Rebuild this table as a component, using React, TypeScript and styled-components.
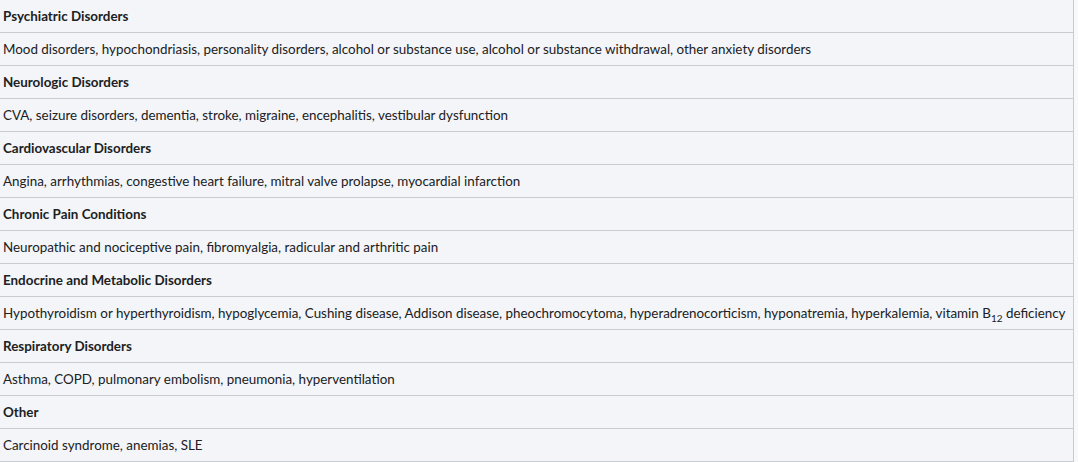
import React from "react";
import styled, { createGlobalStyle } from "styled-components";

const GlobalStyle = createGlobalStyle`
  body {
    margin: 0;
    background: #f8f9fa;
  }
`;

const Table = styled.table`
  width: 1074px;
  table-layout: fixed;
  border-collapse: collapse;
  background: #f3f5f9;
  font-family: Lato, "Liberation Sans", sans-serif;
  font-size: 13.4px;
  color: #202122;
  border-right: 1px solid #c8ccd1;
`;

const Cell = styled.td<{ head?: boolean }>`
  height: 32px;
  padding: 0 3px;
  border-bottom: 1px solid #c8ccd1;
  font-weight: ${props => (props.head ? 700 : 400)};
  white-space: nowrap;
  overflow: hidden;
`;

const Sub = styled.sub`
  font-size: 10px;
  line-height: 0;
`;

interface IGroup {
  title: string;
  items: React.ReactNode;
}

const groups: IGroup[] = [
  {
    title: "Psychiatric Disorders",
    items:
      "Mood disorders, hypochondriasis, personality disorders, alcohol or substance use, alcohol or substance withdrawal, other anxiety disorders"
  },
  {
    title: "Neurologic Disorders",
    items:
      "CVA, seizure disorders, dementia, stroke, migraine, encephalitis, vestibular dysfunction"
  },
  {
    title: "Cardiovascular Disorders",
    items:
      "Angina, arrhythmias, congestive heart failure, mitral valve prolapse, myocardial infarction"
  },
  {
    title: "Chronic Pain Conditions",
    items:
      "Neuropathic and nociceptive pain, fibromyalgia, radicular and arthritic pain"
  },
  {
    title: "Endocrine and Metabolic Disorders",
    items: (
      <>
        Hypothyroidism or hyperthyroidism, hypoglycemia, Cushing disease, Addison disease,
        pheochromocytoma, hyperadrenocorticism, hyponatremia, hyperkalemia, vitamin B
        <Sub>12</Sub> deficiency
      </>
    )
  },
  {
    title: "Respiratory Disorders",
    items: "Asthma, COPD, pulmonary embolism, pneumonia, hyperventilation"
  },
  { title: "Other", items: "Carcinoid syndrome, anemias, SLE" }
];

const App: React.FC = () => {
  return (
    <>
      <GlobalStyle />
      <Table>
        <tbody>
          {groups.map(group => (
            <React.Fragment key={group.title}>
              <tr>
                <Cell head>{group.title}</Cell>
              </tr>
              <tr>
                <Cell>{group.items}</Cell>
              </tr>
            </React.Fragment>
          ))}
        </tbody>
      </Table>
    </>
  );
};

export default App;
